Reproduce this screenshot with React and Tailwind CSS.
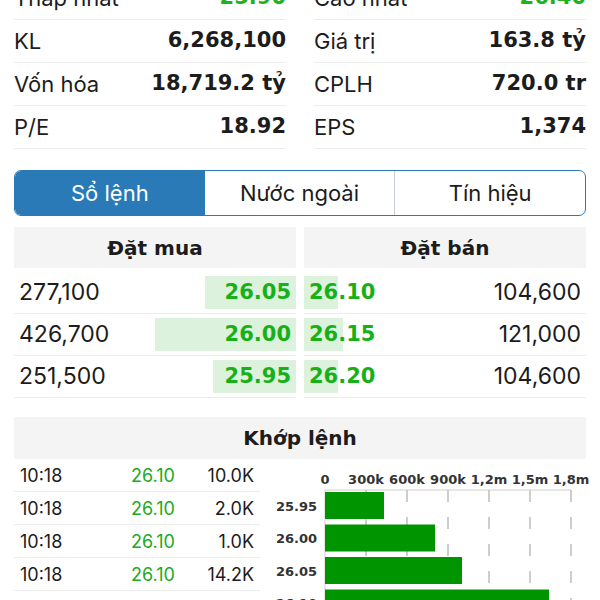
import React from 'react';

const stats = [
  [['Thấp nhất', '25.90', true], ['Cao nhất', '26.40', true]],
  [['KL', '6,268,100'], ['Giá trị', '163.8 tỷ']],
  [['Vốn hóa', '18,719.2 tỷ'], ['CPLH', '720.0 tr']],
  [['P/E', '18.92'], ['EPS', '1,374']],
];

const bids = [
  { vol: '277,100', price: '26.05', bar: 91 },
  { vol: '426,700', price: '26.00', bar: 141 },
  { vol: '251,500', price: '25.95', bar: 83 },
];

const asks = [
  { vol: '104,600', price: '26.10', bar: 34 },
  { vol: '121,000', price: '26.15', bar: 39 },
  { vol: '104,600', price: '26.20', bar: 34 },
];

const trades = [
  ['10:18', '26.10', '10.0K'],
  ['10:18', '26.10', '2.0K'],
  ['10:18', '26.10', '1.0K'],
  ['10:18', '26.10', '14.2K'],
];

const ticks = ['0', '300k', '600k', '900k', '1,2m', '1,5m', '1,8m'];
const volBars = [
  { label: '25.95', w: 59 },
  { label: '26.00', w: 110 },
  { label: '26.05', w: 137 },
  { label: '26.10', w: 224 },
];

const bold = "font-['DejaVu_Sans',sans-serif] font-bold";

function StatCol({ items }) {
  return (
    <div>
      {items.map(([label, value, green]) => (
        <div key={label} className="h-[43px] flex items-center justify-between border-b border-[#ececec]">
          <span className="text-[22px] text-[#1c1c1c]">{label}</span>
          <span className={`${bold} text-[21px] ${green ? 'text-[#1db31d]' : 'text-[#1c1c1c]'}`}>{value}</span>
        </div>
      ))}
    </div>
  );
}

function VolumeChart() {
  const x0 = 65;
  const step = 41;
  return (
    <svg width="340" height="150" className="block" fontFamily="DejaVu Sans, sans-serif">
      {ticks.map((t, i) => (
        <text key={t} x={x0 + i * step} y="25" textAnchor="middle" fontSize="13" fontWeight="700" fill="#333">{t}</text>
      ))}
      <line x1={x0} y1="31" x2={x0 + 6 * step} y2="31" stroke="#cfcfcf" strokeWidth="1" />
      {ticks.map((t, i) => i > 0 && (
        <line key={t} x1={x0 + i * step} y1="31" x2={x0 + i * step} y2="150" stroke="#bdbdbd" strokeWidth="1.5" strokeDasharray="12 15" />
      ))}
      <line x1={x0} y1="31" x2={x0} y2="150" stroke="#cfcfcf" strokeWidth="1" />
      {volBars.map((b, i) => (
        <g key={b.label}>
          <rect x={x0} y={33 + i * 32.5} width={b.w} height="27" fill="#009400" />
          <text x="57" y={33 + i * 32.5 + 18.5} textAnchor="end" fontSize="13" fontWeight="700" fill="#333">{b.label}</text>
        </g>
      ))}
    </svg>
  );
}

export default function App() {
  return (
    <div className="w-[600px] h-[600px] overflow-hidden bg-white font-['Inter',sans-serif] text-[#1c1c1c]">
      <div className="-mt-[23px] px-[14px] grid grid-cols-2 gap-x-[28px]">
        <StatCol items={stats.map(r => r[0])} />
        <StatCol items={stats.map(r => r[1])} />
      </div>

      <div className="mt-[21px] mx-[14px] h-[46px] flex rounded-[7px] border-[1.5px] border-[#2a7ab8] overflow-hidden text-[22px]">
        <div className="flex-1 flex items-center justify-center bg-[#2a7ab8] text-white">Sổ lệnh</div>
        <div className="flex-1 flex items-center justify-center">Nước ngoài</div>
        <div className="flex-1 flex items-center justify-center border-l border-[#c9ced6]">Tín hiệu</div>
      </div>

      <div className="mt-[11px] mx-[14px] flex gap-[8px]">
        <div className="flex-1">
          <div className={`h-[41px] bg-[#f4f4f4] flex items-center justify-center text-[20px] ${bold}`}>Đặt mua</div>
          <div className="mt-[4px]">
            {bids.map(b => (
              <div key={b.price} className="h-[42px] border-b border-[#ececec] flex items-center justify-between py-[4px] text-[23px]">
                <span className="pl-[5px]">{b.vol}</span>
                <div className="h-full flex items-center justify-end bg-[#dcf2dd]" style={{ width: b.bar }}>
                  <span className={`${bold} text-[21px] text-[#17b117] pr-[5px]`}>{b.price}</span>
                </div>
              </div>
            ))}
          </div>
        </div>
        <div className="flex-1">
          <div className={`h-[41px] bg-[#f4f4f4] flex items-center justify-center text-[20px] ${bold}`}>Đặt bán</div>
          <div className="mt-[4px]">
            {asks.map(a => (
              <div key={a.price} className="relative h-[42px] border-b border-[#ececec] flex items-center justify-between py-[4px] text-[23px]">
                <div className="absolute left-0 top-[4px] bottom-[4px] bg-[#dcf2dd]" style={{ width: a.bar }} />
                <span className={`relative ${bold} text-[21px] text-[#17b117] pl-[5px]`}>{a.price}</span>
                <span className="relative pr-[5px]">{a.vol}</span>
              </div>
            ))}
          </div>
        </div>
      </div>

      <div className={`mt-[19px] mx-[14px] h-[42px] bg-[#f4f4f4] flex items-center justify-center text-[20px] ${bold}`}>Khớp lệnh</div>

      <div className="flex">
        <div className="w-[260px] pl-[14px]">
          {trades.map((t, i) => (
            <div key={i} className="h-[33px] flex items-center border-b border-[#ececec] text-[18px]">
              <span className="pl-[6px] w-[117px]">{t[0]}</span>
              <span className="text-[#22a822] w-[54px]">{t[1]}</span>
              <span className="flex-1 text-right pr-[6px]">{t[2]}</span>
            </div>
          ))}
        </div>
        <VolumeChart />
      </div>
    </div>
  );
}
